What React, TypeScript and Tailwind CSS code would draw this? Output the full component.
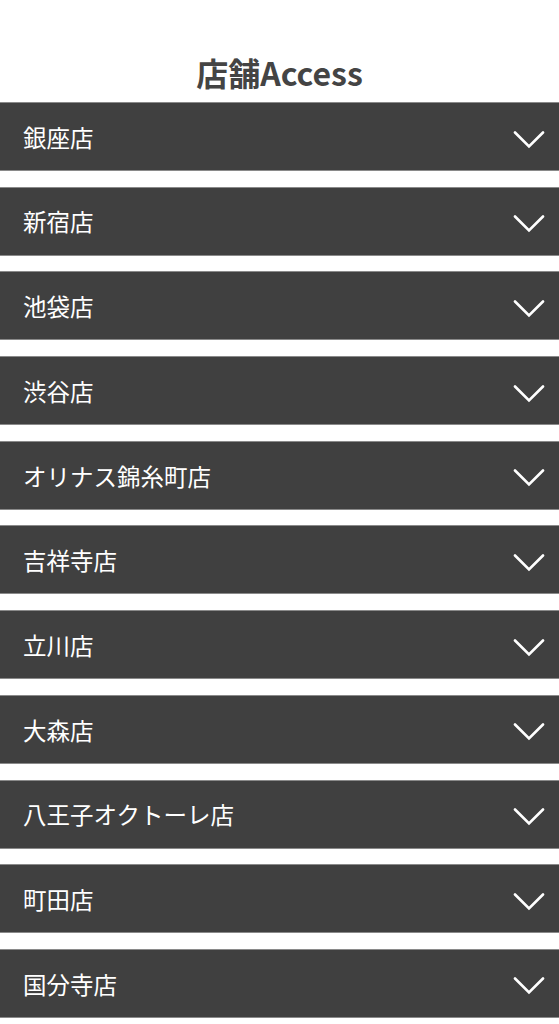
const stores = [
  '銀座店',
  '新宿店',
  '池袋店',
  '渋谷店',
  'オリナス錦糸町店',
  '吉祥寺店',
  '立川店',
  '大森店',
  '八王子オクトーレ店',
  '町田店',
  '国分寺店',
]

function Chevron() {
  return (
    <svg width="32" height="18" viewBox="0 0 32 18" fill="none" className="mt-[6px] text-white">
      <polyline points="2,1.5 16,15.5 30,1.5" stroke="currentColor" strokeWidth="2.6" strokeLinecap="round" strokeLinejoin="miter" />
    </svg>
  )
}

export default function App() {
  return (
    <div className="min-h-screen bg-white" style={{ fontFamily: '"Noto Sans CJK JP", "Noto Sans", sans-serif' }}>
      <h2 className="pt-[50px] pb-[8px] text-center text-[32px] font-bold leading-[44px] text-[#444]">店舗Access</h2>
      <ul className="flex flex-col gap-[15.7px]">
        {stores.map((name) => (
          <li key={name}>
            <button className="flex h-[69px] w-full items-center justify-between border-y border-[#8a8a8a] bg-[#404040] pl-[23px] pr-[14px] text-left">
              <span className="mt-[2px] text-[23.5px] leading-none text-white">{name}</span>
              <Chevron />
            </button>
          </li>
        ))}
      </ul>
    </div>
  )
}
